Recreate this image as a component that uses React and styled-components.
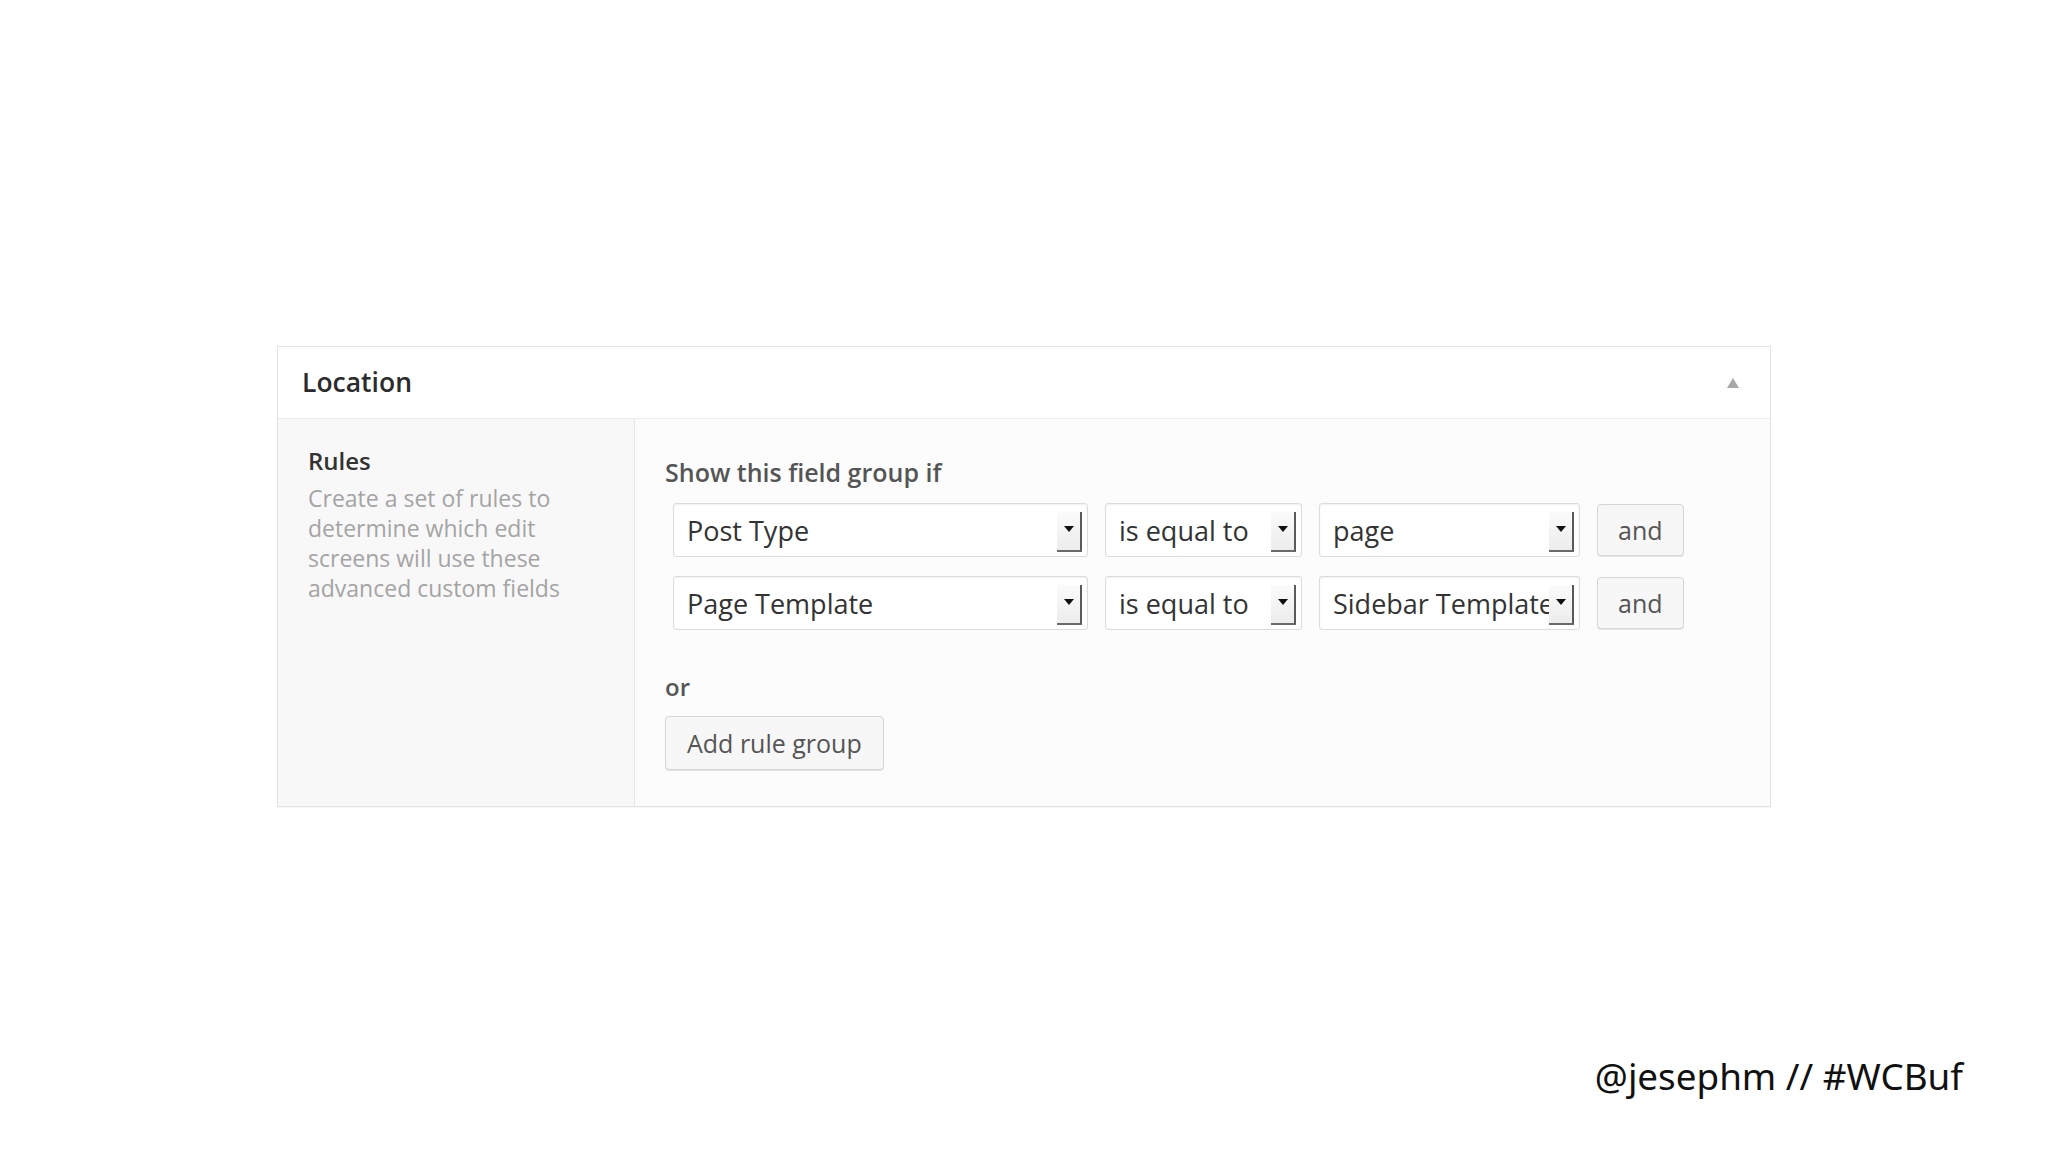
import React from 'react';
import styled, { createGlobalStyle } from 'styled-components';

const GlobalStyle = createGlobalStyle`
  html, body {
    margin: 0;
    padding: 0;
    background: #ffffff;
  }

  body {
    font-family: "Open Sans", "Noto Sans", sans-serif;
  }
`

const Slide = styled.div`
  display: flex;
  flex-direction: column;
  width: 2048px;
  height: 1152px;
  box-sizing: border-box;
  padding: 346px 0 0 277px;
`

const Panel = styled.section`
  width: 1494px;
  box-sizing: border-box;
  border: 1px solid #e3e3e3;
  background: #fcfcfc;
  box-shadow: 0 1px 1px rgba(0, 0, 0, 0.03);
`

const PanelHeader = styled.header`
  display: flex;
  align-items: center;
  justify-content: space-between;
  height: 71px;
  padding: 0 31px 0 24px;
  background: #ffffff;
  border-bottom: 1px solid #ececec;
`

const PanelTitle = styled.h2`
  margin: -2px 0 0;
  font-size: 26.5px;
  font-weight: 600;
  color: #2b2b2b;
`

const ToggleArrow = styled.span`
  width: 0;
  height: 0;
  border-left: 6px solid transparent;
  border-right: 6px solid transparent;
  border-bottom: 10px solid #a8a8a8;
`

const PanelBody = styled.div`
  display: grid;
  grid-template-columns: 357px 1fr;
`

const SideColumn = styled.div`
  box-sizing: border-box;
  padding: 28px 20px 0 30px;
  background: #f8f8f8;
  border-right: 1px solid #e6e6e6;
`

const SideLabel = styled.div`
  font-size: 24px;
  font-weight: 600;
  line-height: 28px;
  color: #333333;
`

const SideHelp = styled.p`
  margin: 8px 0 0;
  font-size: 23px;
  line-height: 30px;
  color: #a4a4a4;
`

const MainColumn = styled.div`
  display: flex;
  flex-direction: column;
  align-items: flex-start;
  padding: 37px 30px 36px 30px;
`

const FieldLabel = styled.div`
  font-size: 25px;
  font-weight: 600;
  line-height: 32px;
  color: #555555;
`

const RuleTable = styled.div`
  display: flex;
  flex-direction: column;
  gap: 19px;
  margin-top: 15px;
  padding-left: 8px;
`

const RuleRow = styled.div`
  display: flex;
  align-items: center;
  gap: 17px;
  height: 54px;
`

const Select = styled.div`
  display: flex;
  align-items: center;
  width: ${p => p.$width}px;
  height: 54px;
  box-sizing: border-box;
  padding: 0 5px 0 13px;
  background: #ffffff;
  border: 1px solid #dcdcdc;
  border-radius: 3px;
  box-shadow: inset 0 1px 2px rgba(0, 0, 0, 0.06);
  font-size: 27px;
  color: #333333;
`

const SelectText = styled.span`
  flex: 1;
  min-width: 0;
  overflow: hidden;
  white-space: nowrap;
  text-overflow: clip;
`

const SelectArrow = styled.span`
  display: flex;
  align-items: center;
  justify-content: center;
  flex: none;
  width: 25px;
  height: 40px;
  margin-top: 3px;
  box-sizing: border-box;
  background: linear-gradient(to bottom, #fbfbfb, #ececec);
  border-right: 2px solid #5a5a5a;
  border-bottom: 2px solid #6a6a6a;

  &::after {
    content: '';
    width: 0;
    height: 0;
    margin-top: -4px;
    border-left: 5px solid transparent;
    border-right: 5px solid transparent;
    border-top: 6px solid #111111;
  }
`

const Button = styled.button`
  height: ${p => p.$height || 54}px;
  padding: 0 ${p => p.$pad || 21}px;
  box-sizing: border-box;
  background: #f7f7f7;
  border: 1px solid #d6d6d6;
  border-radius: 4px;
  box-shadow: 0 1px 0 #e4e4e4;
  font-family: inherit;
  font-size: 25px;
  color: #555555;
`

const OrLabel = styled.div`
  margin-top: 41px;
  font-size: 24px;
  font-weight: 600;
  line-height: 32px;
  color: #555555;
`

const AddGroup = styled(Button)`
  margin-top: 13px;
`

const Credit = styled.div`
  margin-top: auto;
  align-self: flex-end;
  padding: 0 85px 52px 0;
  font-family: "Noto Sans", "Open Sans", sans-serif;
  font-size: 36.8px;
  line-height: 48px;
  color: #111111;
`

const rules = [
  ['Post Type', 'is equal to', 'page'],
  ['Page Template', 'is equal to', 'Sidebar Template'],
]

const widths = [415, 197, 261]

const Dropdown = ({ value, width }) => (
  <Select $width={width}>
    <SelectText>{value}</SelectText>
    <SelectArrow />
  </Select>
)

export default function App() {
  return (
    <>
      <GlobalStyle />
      <Slide>
        <Panel>
          <PanelHeader>
            <PanelTitle>Location</PanelTitle>
            <ToggleArrow />
          </PanelHeader>
          <PanelBody>
            <SideColumn>
              <SideLabel>Rules</SideLabel>
              <SideHelp>
                Create a set of rules to<br />
                determine which edit<br />
                screens will use these<br />
                advanced custom fields
              </SideHelp>
            </SideColumn>
            <MainColumn>
              <FieldLabel>Show this field group if</FieldLabel>
              <RuleTable>
                {rules.map((rule, i) => (
                  <RuleRow key={i}>
                    {rule.map((value, j) => (
                      <Dropdown key={j} value={value} width={widths[j]} />
                    ))}
                    <Button $height={52} $pad={20}>and</Button>
                  </RuleRow>
                ))}
              </RuleTable>
              <OrLabel>or</OrLabel>
              <AddGroup>Add rule group</AddGroup>
            </MainColumn>
          </PanelBody>
        </Panel>
        <Credit>@jesephm // #WCBuf</Credit>
      </Slide>
    </>
  )
}
